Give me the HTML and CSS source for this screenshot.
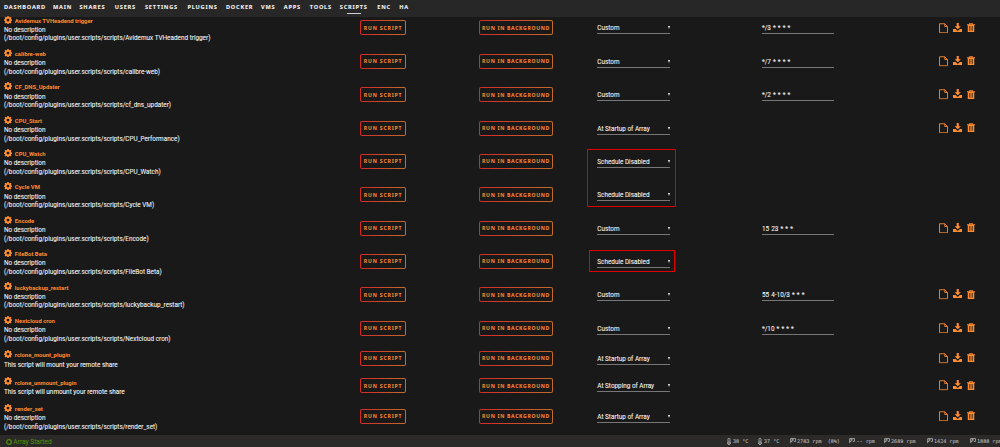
FILE: index.html
```html
<!DOCTYPE html>
<html lang="en">
<head>
    <meta charset="UTF-8">
    <meta name="viewport" content="width=device-width, initial-scale=1.0">
    <title>User Scripts</title>
    <link rel="stylesheet" href="styles.css">
</head>
<body>
    <svg class="sprite">
        <symbol id="gear" viewBox="0 0 16 16">
            <path fill-rule="evenodd" d="M6.6 0h2.8l.4 2.1 1.4.6L13 1.5l1.9 1.9-1.2 1.8.6 1.4 2.1.4v2.4l-2.1.5-.6 1.4 1.2 1.8-1.9 1.9-1.8-1.2-1.4.6-.4 2.1H6.6l-.4-2.1-1.4-.6L3 15.1l-1.9-1.9 1.2-1.8-.6-1.4L0 9.400V7l1.7-.4.6-1.4L1.1 3.4 3 1.5l1.8 1.2 1.4-.6zM8 5.3a2.8 2.8 0 1 0 0 5.6 2.8 2.8 0 0 0 0-5.6z"/>
        </symbol>
        <symbol id="file" viewBox="0 0 18 20">
            <path fill="none" stroke="currentColor" stroke-width="2" d="M1 1h10.500l5.500 5.500v12.500H1zM11.500 1v5.500H17"/>
        </symbol>
        <symbol id="download" viewBox="0 0 18 18">
            <path d="M7 0h4v6h4l-6 6-6-6h4z"/>
            <path d="M0 11.500h5l4 3.500 4-3.500h5V17H0z"/>
        </symbol>
        <symbol id="trash" viewBox="0 0 16 18">
            <path fill-rule="evenodd" d="M5 0h6l1 2.500h4v2h-1.500V18h-13V4.500H0v-2h4zM6 1.500l-.5 1h5l-.5-1zM4.200 6v9.500h1.200V6zM7.400 6v9.500h1.200V6zM10.600 6v9.500h1.200V6z"/>
        </symbol>
        <symbol id="temp" viewBox="0 0 8 14">
            <path fill="none" stroke="currentColor" stroke-width="1.600" d="M2 8V2.500a2 2 0 0 1 4 0V8a3 3 0 1 1-4 0z"/>
            <path d="M3 7h2v5H3z"/>
        </symbol>
        <symbol id="fan" viewBox="0 0 14 12">
            <path fill="none" stroke="currentColor" stroke-width="1.800" d="M1.500 12V1H13v6.500H9M5 1v6.500H1.500M5 4h4"/>
        </symbol>
        <symbol id="ring" viewBox="0 0 12 12">
            <circle cx="6" cy="6" r="4.600" fill="none" stroke="currentColor" stroke-width="2.600"/>
        </symbol>
    </svg>

    <nav class="menu">
        <a>DASHBOARD</a>
        <a>MAIN</a>
        <a>SHARES</a>
        <a>USERS</a>
        <a>SETTINGS</a>
        <a>PLUGINS</a>
        <a>DOCKER</a>
        <a>VMS</a>
        <a>APPS</a>
        <a>TOOLS</a>
        <a class="active">SCRIPTS</a>
        <a>ENC</a>
        <a>HA</a>
    </nav>

    <main class="scripts" id="scripts">
        <div class="highlight highlight-top"></div>
        <div class="highlight highlight-bottom"></div>
    </main>

    <footer class="footer">
        <div class="array"><svg class="ring"><use href="#ring"/></svg>Array Started</div>
        <div class="sensors">
            <span><svg class="temp"><use href="#temp"/></svg>38 °C</span>
            <span><svg class="temp"><use href="#temp"/></svg>37 °C</span>
            <span><svg class="fan"><use href="#fan"/></svg>2783 rpm&nbsp; (8%)</span>
            <span><svg class="fan"><use href="#fan"/></svg>-- rpm</span>
            <span><svg class="fan"><use href="#fan"/></svg>2689 rpm</span>
            <span><svg class="fan"><use href="#fan"/></svg>1424 rpm</span>
            <span><svg class="fan"><use href="#fan"/></svg>1888 rpm</span>
        </div>
    </footer>

    <script>
    const path = '/boot/config/plugins/user.scripts/scripts/';
    // name, folder or description, schedule, cron, has action icons
    const scripts = [
        ['Avidemux TVHeadend trigger', 'Avidemux TVHeadend trigger', 'Custom', '*/3 * * * *', true],
        ['calibre-web', 'calibre-web', 'Custom', '*/7 * * * *', true],
        ['CF_DNS_Updater', 'cf_dns_updater', 'Custom', '*/2 * * * *', true],
        ['CPU_Start', 'CPU_Performance', 'At Startup of Array', '', true],
        ['CPU_Watch', 'CPU_Watch', 'Schedule Disabled', '', false],
        ['Cycle VM', 'Cycle VM', 'Schedule Disabled', '', false],
        ['Encode', 'Encode', 'Custom', '15 23 * * *', true],
        ['FileBot Beta', 'FileBot Beta', 'Schedule Disabled', '', false],
        ['luckybackup_restart', 'luckybackup_restart', 'Custom', '55 4-10/3 * * *', true],
        ['Nextcloud cron', 'Nextcloud cron', 'Custom', '*/10 * * * *', true],
        ['rclone_mount_plugin', 'This script will mount your remote share', 'At Startup of Array', '', true],
        ['rclone_unmount_plugin', 'This script will unmount your remote share', 'At Stopping of Array', '', true],
        ['render_set', 'render_set', 'At Startup of Array', '', true]
    ];

    let html = '';
    scripts.forEach(function (s) {
        const short = s[1].startsWith('This');
        const text = short ? s[1] : 'No description<br>(' + path + s[1] + ')';
        html += '<div class="row' + (short ? ' short' : '') + '">' +
            '<div><div class="name"><svg><use href="#gear"/></svg>' + s[0] + '</div><div class="desc">' + text + '</div></div>' +
            '<div><button class="btn">RUN SCRIPT</button></div>' +
            '<div><button class="btn wide">RUN IN BACKGROUND</button></div>' +
            '<div class="field select">' + s[2] + '<span class="arrow"></span></div>' +
            (s[3] ? '<div class="field">' + s[3] + '</div>' : '<div></div>') +
            '<div class="actions">' + (s[4] ? '<svg class="file"><use href="#file"/></svg><svg class="download"><use href="#download"/></svg><svg class="trash"><use href="#trash"/></svg>' : '') + '</div>' +
            '</div>';
    });
    document.getElementById('scripts').insertAdjacentHTML('afterbegin', html);
    </script>
</body>
</html>
```
FILE: styles.css
```css
* {
    margin: 0;
    padding: 0;
    box-sizing: border-box;
}

body {
    height: 447px;
    overflow: hidden;
    background-color: #191919;
    color: #f2f2f2;
    font-family: Roboto, sans-serif;
    font-size: 6.380px;
    -webkit-text-stroke: 0.080px;
}

svg {
    fill: currentColor;
    flex: none;
}

.sprite {
    display: none;
}

.menu {
    height: 17px;
    padding-left: 4px;
    background-color: #272727;
    display: grid;
    grid-template-columns: 49px 26.500px 35.300px 30.200px 42.500px 38.500px 35px 22.800px 26px 30px 37.500px 22px 20px;
    font-family: "Noto Sans", sans-serif;
    font-size: 5.600px;
    font-weight: bold;
    line-height: 15px;
    letter-spacing: 0.780px;
}

.menu a {
    white-space: nowrap;
}

.active::after {
    content: "";
    display: block;
    width: 14px;
    height: 1px;
    margin: -2px 0 0 7.500px;
    background-color: #d0d0d0;
}

.scripts {
    position: relative;
    margin-top: -5.700px;
    height: 423.700px;
}

.row {
    height: 33.350px;
    padding-left: 4px;
    display: grid;
    grid-template-columns: 356px 119px 118.300px 164.700px 177px 1fr;
    align-items: center;
}

.short {
    height: 27.300px;
}

.name {
    height: 10.600px;
    padding-top: 2.400px;
    display: flex;
    align-items: center;
    gap: 2.800px;
    color: #ff8c2f;
    font-size: 5.9px;
    font-weight: bold;
    -webkit-text-stroke: 0;
}

.name svg {
    width: 8px;
    height: 8px;
    margin-top: -2.500px;
}

.desc {
    padding-top: 1.200px;
    margin-bottom: -1.200px;
    line-height: 8.400px;
}

.btn {
    display: block;
    width: 46px;
    height: 15px;
    border: 1px solid transparent;
    border-radius: 2px;
    background: linear-gradient(#191919, #191919) padding-box, linear-gradient(90deg, #d42a28, #c46c28) border-box;
    color: #f0852d;
    font-family: "Noto Sans", sans-serif;
    font-size: 5.100px;
    font-weight: bold;
    letter-spacing: 0.820px;
    white-space: nowrap;
}

.wide {
    width: 74px;
    letter-spacing: 0.680px;
}

.field {
    width: 72.500px;
    height: 13px;
    border-bottom: 1px solid #777;
    line-height: 14.200px;
    word-spacing: 0.500px;
}

.select {
    display: flex;
    justify-content: space-between;
    word-spacing: 0;
}

.arrow {
    margin-top: 5px;
    height: 3px;
    border: 1.500px solid transparent;
    border-top: 3px solid #f2f2f2;
    border-bottom: 0;
}

.actions {
    display: flex;
    align-items: center;
    padding-left: 0.500px;
    color: #ff8c2f;
}

.file {
    width: 9px;
    height: 10.500px;
    color: #e67f2c;
}

.download {
    width: 9.500px;
    height: 9.500px;
    margin: -1px 4.500px 0 4.500px;
}

.trash {
    width: 8px;
    height: 9px;
    margin-top: -1px;
}

.highlight {
    position: absolute;
    border: 1px solid #e00000;
}

.highlight-top {
    left: 587px;
    top: 137.700px;
    width: 89px;
    height: 58px;
}

.highlight-bottom {
    left: 589px;
    top: 238.700px;
    width: 86px;
    height: 22px;
}

.footer {
    height: 12px;
    background-color: #2b2a29;
    display: flex;
    justify-content: space-between;
    line-height: 12px;
}

.array {
    display: flex;
    align-items: center;
    padding: 1px 0 0 6px;
    gap: 1.300px;
    color: #4f8a10;
    font-size: 6.600px;
}

.ring {
    width: 6px;
    height: 6px;
}

.sensors {
    width: 273px;
    display: grid;
    grid-template-columns: 31px 31.500px 59.500px 34.500px 43px 43px 30px;
    color: #bdbdbd;
    font-family: "DejaVu Sans Mono", monospace;
    font-size: 5.100px;
}

.sensors span {
    display: flex;
    align-items: center;
    white-space: nowrap;
}

.temp {
    width: 4px;
    height: 7px;
    margin-right: 2px;
}

.fan {
    width: 6px;
    height: 5.500px;
    margin-right: 1.500px;
}
```
